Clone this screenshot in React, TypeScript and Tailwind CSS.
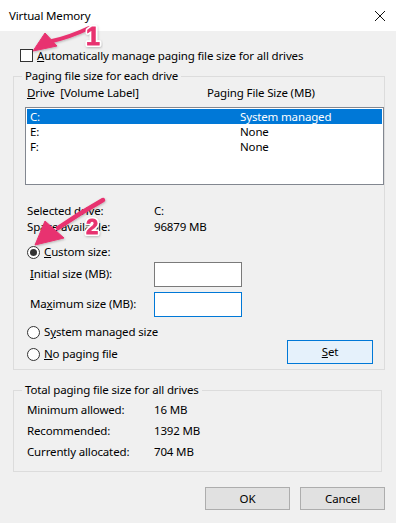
import React from 'react'

const FONT = { fontFamily: '"Segoe UI", "Noto Sans", "Liberation Sans", sans-serif' }

function Radio({ checked }: { checked?: boolean }) {
  return (
    <span className="w-[13px] h-[13px] rounded-full border border-[#333] bg-white flex items-center justify-center shrink-0">
      {checked && <span className="w-[7px] h-[7px] rounded-full bg-[#333]" />}
    </span>
  )
}

function Btn({ children, active, className }: { children: React.ReactNode; active?: boolean; className?: string }) {
  return (
    <div
      className={
        'h-[23px] w-[85px] flex items-center justify-center border ' +
        (active ? 'border-[#0078d7] bg-[#e5f1fb] ' : 'border-[#adadad] bg-[#e1e1e1] ') +
        (className ?? '')
      }
    >
      {children}
    </div>
  )
}

function Arrows() {
  return (
    <svg className="absolute inset-0 pointer-events-none" width="396" height="523" viewBox="0 0 396 523">
      <defs>
        <filter id="sh" x="-20%" y="-20%" width="140%" height="140%">
          <feDropShadow dx="0.5" dy="1" stdDeviation="0.8" floodColor="#000" floodOpacity="0.25" />
        </filter>
      </defs>
      <g fill="#e8336f" stroke="#e8336f" filter="url(#sh)">
        <path d="M89 28 Q70 37 52 41" strokeWidth="4" fill="none" strokeLinecap="round" />
        <polygon points="33,51 45,33 57,46" strokeWidth="1" strokeLinejoin="round" />
        <path d="M103 200 Q80 213 58 228" strokeWidth="4.5" fill="none" strokeLinecap="round" />
        <polygon points="35,245 45,221 64,238" strokeWidth="1" strokeLinejoin="round" />
      </g>
      <g fontFamily="'Liberation Sans', Arial, sans-serif" fontWeight="bold" filter="url(#sh)">
        <g fill="#fff" stroke="#fff" strokeWidth="4" strokeLinejoin="round">
          <text x="86" y="45" fontSize="25">1</text>
          <text x="86" y="234" fontSize="22">2</text>
        </g>
        <g fill="#e8336f" stroke="#e8336f" strokeWidth="0.8">
          <text x="86" y="45" fontSize="25">1</text>
          <text x="86" y="234" fontSize="22">2</text>
        </g>
      </g>
    </svg>
  )
}

export default function App() {
  return (
    <div
      className="relative w-[396px] h-[523px] bg-[#f0f0f0] overflow-hidden text-[11.5px] tracking-[-0.15px] text-black"
      style={FONT}
    >
      <div className="h-[31px] bg-white flex items-center justify-between pl-[9px] pr-[10px]">
        <span>Virtual Memory</span>
        <svg width="12" height="12" viewBox="0 0 12 12">
          <path d="M1 1 L11 11 M11 1 L1 11" stroke="#111" strokeWidth="1" />
        </svg>
      </div>

      <div className="flex items-center gap-[4px] pl-[20px] mt-[18px] h-[13px]">
        <span className="w-[13px] h-[13px] border border-[#333] bg-white shrink-0" />
        <span><u>A</u>utomatically manage paging file size for all drives</span>
      </div>

      <fieldset className="mx-[13px] mt-[6px] w-[369px] h-[302px] border border-[#dcdcdc] pl-[11px] pr-0">
        <legend className="px-[3px] -ml-[3px] leading-[16px]">Paging file size for each drive</legend>
        <div className="flex h-[14px] items-center pl-[2px] mt-[2px]">
          <span className="w-[180px]"><u>D</u>rive&nbsp; [Volume Label]</span>
          <span>Paging File Size (MB)</span>
        </div>
        <div className="mt-[7px] w-[359px] h-[78px] border border-[#828790] bg-white p-px">
          {[
            ['C:', 'System managed'],
            ['E:', 'None'],
            ['F:', 'None'],
          ].map(([d, s], i) => (
            <div key={d} className={'h-[15px] flex items-center pl-[3px] ' + (i === 0 ? 'bg-[#0078d7] text-white' : '')}>
              <span className="w-[210px]">{d}</span>
              <span>{s}</span>
            </div>
          ))}
        </div>

        <div className="mt-[18px] flex flex-col pl-[2px]">
          <div className="flex h-[16px] items-center">
            <span className="w-[127px]">Selected drive:</span>
            <span>C:</span>
          </div>
          <div className="flex h-[16px] items-center">
            <span className="w-[127px]">Space available:</span>
            <span>96879 MB</span>
          </div>
        </div>

        <div className="mt-[10px] flex items-center gap-[4px] h-[14px] pl-[2px]">
          <Radio checked />
          <span><u>C</u>ustom size:</span>
        </div>
        <div className="mt-[2px] flex items-center h-[26px] pl-[5px]">
          <span className="w-[124px]"><u>I</u>nitial size (MB):</span>
          <span className="w-[88px] h-[25px] border border-[#7a7a7a] bg-white" />
        </div>
        <div className="mt-[4px] flex items-center h-[26px] pl-[5px]">
          <span className="w-[124px]">Ma<u>x</u>imum size (MB):</span>
          <span className="w-[88px] h-[25px] border border-[#0078d7] bg-white" />
        </div>

        <div className="mt-[8px] flex items-center gap-[4px] h-[14px] pl-[2px]">
          <Radio />
          <span>S<u>y</u>stem managed size</span>
        </div>
        <div className="mt-[1px] flex items-center justify-between pl-[2px] pr-[11px]">
          <div className="flex items-center gap-[4px] h-[24px] mt-[2px]">
            <Radio />
            <span><u>N</u>o paging file</span>
          </div>
          <Btn active className="w-[86px] h-[24px] mt-[-3px]">
            <span><u>S</u>et</span>
          </Btn>
        </div>
      </fieldset>

      <fieldset className="mx-[13px] mt-[12px] w-[369px] h-[90px] border border-[#dcdcdc] pl-[13px]">
        <legend className="px-[3px] -ml-[5px] leading-[16px]">Total paging file size for all drives</legend>
        <div className="flex flex-col mt-[1px]">
          {[
            ['Minimum allowed:', '16 MB'],
            ['Recommended:', '1392 MB'],
            ['Currently allocated:', '704 MB'],
          ].map(([l, v]) => (
            <div key={l} className="flex h-[21px] items-center">
              <span className="w-[127px]">{l}</span>
              <span>{v}</span>
            </div>
          ))}
        </div>
      </fieldset>

      <div className="flex justify-end gap-[10px] pr-[11px] mt-[15px]">
        <Btn>OK</Btn>
        <Btn>Cancel</Btn>
      </div>

      <Arrows />
    </div>
  )
}
